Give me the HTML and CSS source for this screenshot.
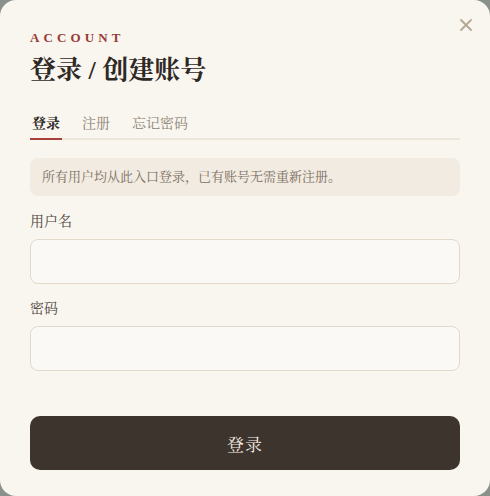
FILE: index.html
```html
<!DOCTYPE html>
<html lang="zh-CN">
<head>
<meta charset="utf-8">
<title>登录 / 创建账号</title>
<link rel="stylesheet" href="styles.css">
</head>
<body>
<div class="modal">
  <button class="close" aria-label="关闭">
    <svg width="14" height="14" viewBox="0 0 14 14"><path d="M2 2 L12 12 M12 2 L2 12" stroke="currentColor" stroke-width="1.8" stroke-linecap="round" fill="none"/></svg>
  </button>
  <div class="eyebrow">ACCOUNT</div>
  <h1 class="title">登录 / 创建账号</h1>
  <div class="tabs">
    <span class="tab active">登录</span>
    <span class="tab">注册</span>
    <span class="tab">忘记密码</span>
  </div>
  <div class="notice">所有用户均从此入口登录，已有账号无需重新注册。</div>
  <label class="label">用户名</label>
  <div class="input"></div>
  <label class="label second">密码</label>
  <div class="input"></div>
  <button class="submit">登录</button>
</div>
</body>
</html>
```

FILE: styles.css
```css
html, body {
  margin: 0;
  padding: 0;
  background: #8a908b;
}
body {
  font-family: "Liberation Serif", "Noto Serif CJK SC", "Source Han Serif SC", "AR PL UMing CN", "AR PL SungtiL GB", "WenQuanYi Zen Hei", serif;
}
.modal {
  position: relative;
  box-sizing: border-box;
  width: 490px;
  height: 496px;
  background: #f9f6f0;
  border-radius: 16px;
  padding: 30px 30px 0 30px;
  display: flex;
  flex-direction: column;
}
.close {
  position: absolute;
  top: 18px;
  right: 17px;
  border: 0;
  background: none;
  padding: 0;
  color: #b3a792;
  width: 14px;
  height: 14px;
  display: flex;
}
.eyebrow {
  font-size: 13px;
  font-weight: bold;
  letter-spacing: 4.1px;
  color: #9a3a36;
  line-height: 16px;
}
.title {
  margin: 8px 0 0 0;
  font-size: 26px;
  font-weight: bold;
  color: #2e2925;
  line-height: 34px;
}
.tabs {
  margin-top: 26px;
  display: flex;
  gap: 18px;
  border-bottom: 2px solid #ede6da;
}
.tab {
  padding: 0 2px 4px 2px;
  font-size: 14px;
  line-height: 20px;
  color: #8f8474;
  margin-bottom: -2px;
  border-bottom: 2px solid transparent;
}
.tab.active {
  color: #2e2925;
  font-weight: bold;
  border-bottom-color: #a8403c;
}
.notice {
  margin-top: 18px;
  background: #f2ebe1;
  border-radius: 8px;
  padding: 10px 12px;
  font-size: 13px;
  line-height: 18px;
  color: #7a6f62;
}
.label {
  margin-top: 16px;
  font-size: 14px;
  line-height: 20px;
  color: #4d443c;
}
.label.second {
  margin-top: 15px;
}
.input {
  margin-top: 7px;
  height: 43px;
  flex: none;
  border: 1px solid #e2d9ca;
  border-radius: 8px;
  background: #fbf9f5;
}
.submit {
  margin-top: 45px;
  height: 54px;
  flex: none;
  border: 0;
  border-radius: 10px;
  background: #3d342e;
  color: #f4ede2;
  font-family: inherit;
  font-size: 17px;
  letter-spacing: 1px;
}
```
